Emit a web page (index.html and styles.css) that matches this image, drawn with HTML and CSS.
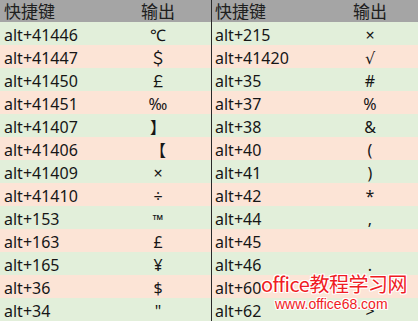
FILE: index.html
```html
<!DOCTYPE html>
<html lang="zh">
<head>
<meta charset="utf-8">
<link rel="stylesheet" href="styles.css">
</head>
<body>
<div class="sheet">
  <div class="table left">
    <div class="row head"><div class="key">快捷键</div><div class="out">输出</div></div>
    <div class="row g"><div class="key">alt+41446</div><div class="out">℃</div></div>
    <div class="row p"><div class="key">alt+41447</div><div class="out">＄</div></div>
    <div class="row g"><div class="key">alt+41450</div><div class="out">￡</div></div>
    <div class="row p"><div class="key">alt+41451</div><div class="out">‰</div></div>
    <div class="row g"><div class="key">alt+41407</div><div class="out">】</div></div>
    <div class="row p"><div class="key">alt+41406</div><div class="out">【</div></div>
    <div class="row g"><div class="key">alt+41409</div><div class="out">×</div></div>
    <div class="row p"><div class="key">alt+41410</div><div class="out">÷</div></div>
    <div class="row g"><div class="key">alt+153</div><div class="out tm">™</div></div>
    <div class="row p"><div class="key">alt+163</div><div class="out">£</div></div>
    <div class="row g"><div class="key">alt+165</div><div class="out">¥</div></div>
    <div class="row p"><div class="key">alt+36</div><div class="out">$</div></div>
    <div class="row g"><div class="key">alt+34</div><div class="out">"</div></div>
  </div>
  <div class="table right">
    <div class="row head"><div class="key">快捷键</div><div class="out">输出</div></div>
    <div class="row g"><div class="key">alt+215</div><div class="out">×</div></div>
    <div class="row p"><div class="key">alt+41420</div><div class="out sqrt">√</div></div>
    <div class="row g"><div class="key">alt+35</div><div class="out">#</div></div>
    <div class="row p"><div class="key">alt+37</div><div class="out">%</div></div>
    <div class="row g"><div class="key">alt+38</div><div class="out">&amp;</div></div>
    <div class="row p"><div class="key">alt+40</div><div class="out">(</div></div>
    <div class="row g"><div class="key">alt+41</div><div class="out">)</div></div>
    <div class="row p"><div class="key">alt+42</div><div class="out">*</div></div>
    <div class="row g"><div class="key">alt+44</div><div class="out">,</div></div>
    <div class="row p"><div class="key">alt+45</div><div class="out"></div></div>
    <div class="row g"><div class="key">alt+46</div><div class="out">.</div></div>
    <div class="row p"><div class="key">alt+60</div><div class="out"></div></div>
    <div class="row g"><div class="key">alt+62</div><div class="out">&gt;</div></div>
  </div>
  <div class="watermark">
    <div class="wm1">office教程学习网</div>
    <div class="wm2">www.office68.com</div>
  </div>
</div>
</body>
</html>
```

FILE: styles.css
```css
html, body {
  margin: 0;
  padding: 0;
  background: #ffffff;
}
.sheet {
  position: relative;
  display: flex;
  width: 418px;
  height: 321px;
  overflow: hidden;
  font-family: "Noto Sans", "Noto Sans CJK SC", sans-serif;
  color: #161616;
}
.table {
  display: flex;
  flex-direction: column;
}
.left {
  width: 211px;
  border-right: 1px solid #2a2a2a;
}
.right {
  width: 206px;
}
.row {
  display: flex;
  height: 23px;
  box-sizing: border-box;
  font-size: 16px;
  line-height: 19px;
  padding-top: 4px;
}
.row.head {
  height: 22px;
  background: #a5a5a5;
  font-family: "Noto Sans CJK SC", sans-serif;
  font-size: 17px;
  line-height: 22px;
  padding-top: 0;
  color: #202020;
}
.row.g { background: #e2efda; }
.row.p { background: #fce4d6; }
.key {
  padding-left: 4px;
  white-space: nowrap;
}
.left .key { width: 106px; box-sizing: border-box; }
.left .out { width: 104px; text-align: center; }
.right .key { width: 110px; box-sizing: border-box; padding-left: 3px; }
.right .out { width: 96px; text-align: center; }
.out.tm { font-size: 14px; }
.out.sqrt { font-family: "DejaVu Sans", sans-serif; }
.watermark {
  position: absolute;
  left: 261px;
  top: 273px;
  color: #f01c24;
  font-family: "Noto Sans CJK SC", sans-serif;
  text-shadow: 1px 0 #fff, -1px 0 #fff, 0 1px #fff, 0 -1px #fff, 1px 1px #fff, -1px -1px #fff, 1px -1px #fff, -1px 1px #fff;
}
.wm1 {
  font-size: 20px;
  line-height: 22px;
  letter-spacing: -0.5px;
}
.wm2 {
  font-family: "Liberation Sans", sans-serif;
  font-size: 14px;
  line-height: 16px;
  margin-left: 14px;
  margin-top: 1px;
}
```
